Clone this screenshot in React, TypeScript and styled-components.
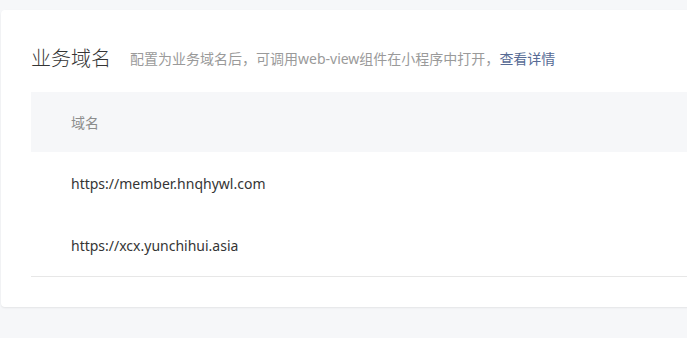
import React from "react";
import styled, { createGlobalStyle } from "styled-components";

const Global = createGlobalStyle`
  html, body { margin: 0; padding: 0; background: #f6f7f9; overflow: hidden; }
  body { font-family: "Noto Sans", "Noto Sans CJK SC", sans-serif; }
`;

const Page = styled.div`
  width: 687px;
  height: 338px;
  padding: 10px 0 0 1px;
  box-sizing: border-box;
  overflow: hidden;
`;

const Card = styled.section`
  width: 740px;
  background: #fff;
  border-radius: 4px;
  box-shadow: 0 1px 2px rgba(0, 0, 0, 0.08);
  padding: 30px 0 30px 30px;
  box-sizing: border-box;
`;

const Header = styled.header`
  display: flex;
  align-items: center;
  height: 34px;
  margin-bottom: 18px;
`;

const Title = styled.h2`
  margin: 0;
  font-size: 20px;
  font-weight: 300;
  color: #353535;
  font-family: "Noto Sans CJK SC", sans-serif;
`;

const Desc = styled.p`
  margin: 0 0 0 19px;
  padding-top: 2px;
  font-size: 14px;
  color: #9a9a9a;
`;

const Link = styled.a`
  color: #576b95;
  text-decoration: none;
`;

const Table = styled.div`
  display: flex;
  flex-direction: column;
  border-bottom: 1px solid #e7e7e7;
`;

const Row = styled.div<{ $head?: boolean }>`
  display: flex;
  align-items: center;
  height: ${(p) => (p.$head ? "60px" : "62px")};
  padding-left: 40px;
  font-size: 14px;
  background: ${(p) => (p.$head ? "#f6f7f9" : "#fff")};
  color: ${(p) => (p.$head ? "#8d8d8d" : "#353535")};
`;

const domains = ["https://member.hnqhywl.com", "https://xcx.yunchihui.asia"];

export default function App() {
  return (
    <Page>
      <Global />
      <Card>
        <Header>
          <Title>业务域名</Title>
          <Desc>
            配置为业务域名后，可调用web-view组件在小程序中打开，
            <Link href="#">查看详情</Link>
          </Desc>
        </Header>
        <Table>
          <Row $head>域名</Row>
          {domains.map((d) => (
            <Row key={d}>{d}</Row>
          ))}
        </Table>
      </Card>
    </Page>
  );
}
